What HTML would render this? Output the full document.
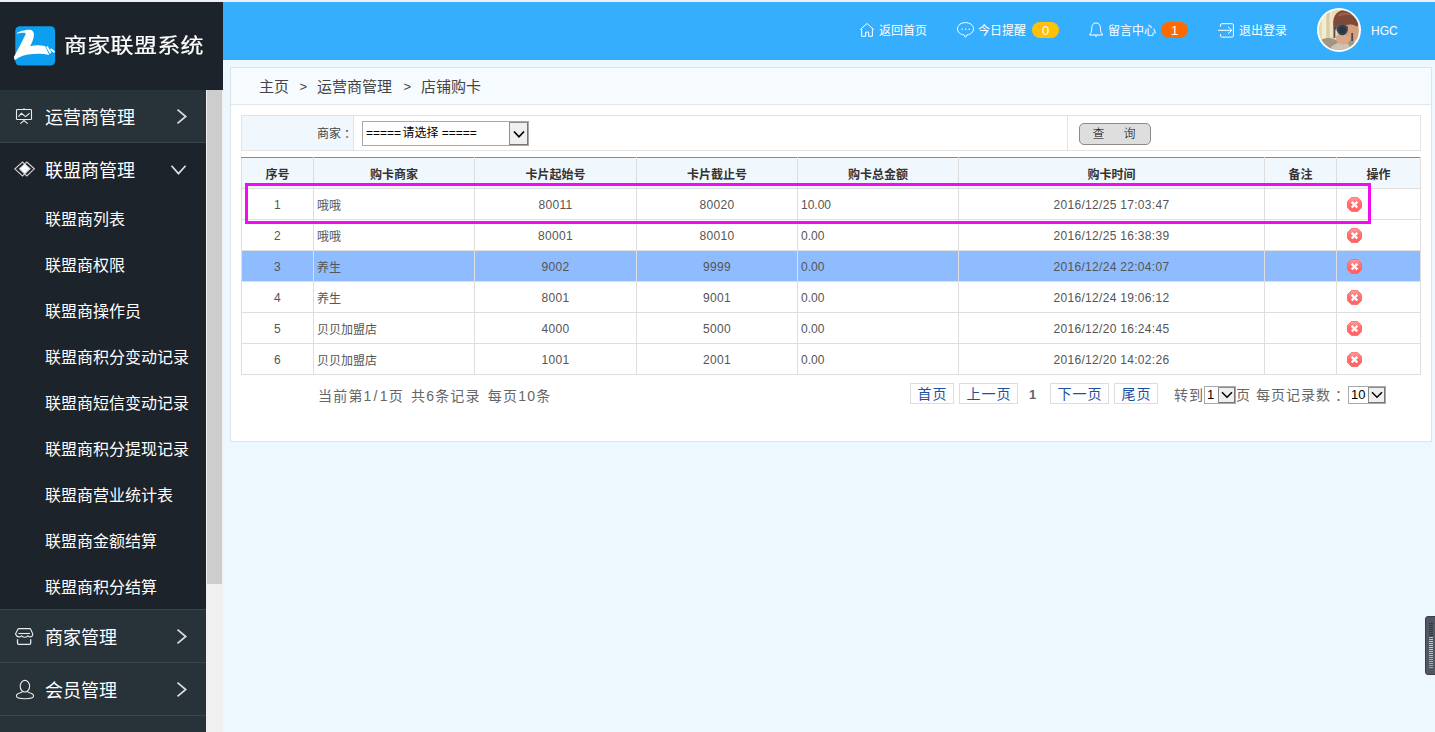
<!DOCTYPE html>
<html lang="zh-CN">
<head>
<meta charset="utf-8">
<title>商家联盟系统</title>
<style>
*{box-sizing:border-box;margin:0;padding:0}
html,body{width:1435px;height:732px;overflow:hidden}
body{position:relative;background:#edf7fe;font-family:"Liberation Sans","Noto Sans CJK SC",sans-serif;font-size:12px;color:#555}
.abs{position:absolute}
#topstrip{left:0;top:0;width:1435px;height:2px;background:#f0f0f4}
#sidetop{left:0;top:2px;width:223px;height:88px;background:#1d232a}
#header{left:223px;top:2px;width:1212px;height:58px;background:#35aefe}
#logo{left:15px;top:25.500px;width:40px;height:39.500px;overflow:visible}
#brand{left:64px;top:30.500px;transform:scaleY(.89);-webkit-text-stroke:.25px #fff;font-size:23px;line-height:30px;color:#fff;letter-spacing:0.3px;white-space:nowrap}
/* sidebar */
#side{left:0;top:90px;width:206px;height:642px;background:#283239;overflow:hidden}
#side .item{position:relative;height:53px;border-bottom:1px solid #3b454d;color:#fff;font-size:18px;line-height:56px;padding-left:45px;overflow:hidden;white-space:nowrap}
#side .item.open{background:#1d232a;border-bottom:0;height:52px}
#side .ico{position:absolute;left:12px;top:14px;width:26px;height:26px}
#side .arr{position:absolute;left:170px;top:16px;width:22px;height:22px}
#side .sub{background:#1d232a;border-bottom:1px solid #3b454d;height:415px}
#side .sub div{height:46px;line-height:49px;overflow:hidden;padding-left:45px;color:#fff;font-size:16px;white-space:nowrap}
#sbar{left:206px;top:90px;width:17px;height:642px;background:#f0f0f0}
#sthumb{left:207px;top:90px;width:15px;height:494px;background:#cdcdcd}
/* header nav */
.nav{position:absolute;top:0;height:58px;line-height:58.500px;color:#fff;font-size:12px;white-space:nowrap}
.nav svg{position:absolute}
.badge{position:absolute;top:20px;height:16px;line-height:17.500px;border-radius:8px;color:#fff;font-size:13px;text-align:center}
/* panel */
#pin{left:0;top:1px;width:1200px;height:0}
#panel{left:230px;top:67px;width:1202px;height:375px;background:#fff;border:1px solid #dfe3e6}
#crumb{left:0;top:-1px;width:1200px;height:37px;background:#f6fbff;border-bottom:1px solid #e3e6e8;font-size:15px;line-height:35px;color:#444;white-space:nowrap}
#crumb span{position:absolute;top:1px}
#crumb span.gt{font-size:13px}
#search{left:10px;top:46px;width:1180px;height:36px;border:1px solid #e3e3e3;background:#fff}
#search .lab{position:absolute;left:0;top:0;width:112px;height:34px;background:#f1f8fd;border-right:1px solid #e3e3e3;line-height:37px;text-align:right;padding-right:0;color:#444;font-size:12px;overflow:hidden}
#search .sel{position:absolute;left:120px;top:5px;width:167px;height:25px;border:1px solid #a9a9a9;background:#fff;font-size:12px;line-height:23px;color:#000;padding-left:3px;white-space:nowrap}
.dd{position:absolute;right:0;top:0;bottom:0;background:#efefef;border:1px solid #8d8d8d;border-right-color:#777;border-bottom-color:#777}
.dd svg{position:absolute;left:50%;top:50%}
#search .vline{position:absolute;left:825px;top:0;width:1px;height:34px;background:#e3e3e3}
#qbtn{position:absolute;left:837px;top:7px;width:72px;height:22px;border:1px solid #8a8a8a;border-radius:5px;background:#dedede;color:#000;font-size:12px;line-height:21px;text-align:center;padding-right:2px;font-weight:300;overflow:hidden;white-space:nowrap}
table{position:absolute;left:10px;top:88px;width:1179px;border-collapse:collapse;table-layout:fixed}
th{height:31px;background:#f1f8fd;border:1px solid #dedede;border-top:1px solid #3c9fe6;color:#333;font-size:12px;font-weight:bold;text-align:center;padding:0}
td{height:31px;border:1px solid #dedede;text-align:center;font-size:12px;color:#555;padding:0;letter-spacing:.3px}
td.l{text-align:left;padding-left:3px;letter-spacing:0}
td.n{padding-top:2px}
tr.hl td{background:#8fbcff}
td.op{position:relative}
.del{position:absolute;left:10px;top:8px;width:15px;height:15px}
#magenta{left:14px;top:114px;width:1126px;height:41px;border:3px solid #f20df0}
#pinfo{left:87px;top:316px;font-size:14px;letter-spacing:1.200px;word-spacing:2px;color:#666;line-height:22px;white-space:nowrap}
.pb{position:absolute;top:314px;height:21px;border:1px solid #ddd;background:#fff;color:#1e50a2;font-size:14px;letter-spacing:1px;line-height:20px;text-align:center;white-space:nowrap;padding-left:1px}
.pt{position:absolute;top:315px;font-size:14px;letter-spacing:1px;color:#666;line-height:22px;white-space:nowrap}
.psel{position:absolute;top:317px;height:18px;border:1px solid #a9a9a9;background:#fff;color:#000;font-size:13px;line-height:16px;padding-left:2px;letter-spacing:0}
#widget{left:1425px;top:616px;width:14px;height:59px;border:1px solid #3a3f49;border-radius:3px;background:#525863}
</style>
</head>
<body>
<div class="abs" id="topstrip"></div>
<div class="abs" id="sidetop"></div>
<svg class="abs" id="logo" viewBox="0 0 40 39.500">
<rect x="0.300" y="0.300" width="39.800" height="39.200" rx="4.500" fill="#0d9fef"/>
<path d="M1.800 7.200 C4 5.500 10 3.800 14.500 3.800 C17 3.800 18.900 5.500 18.900 8.500 C18.900 12 17.500 16 15.200 20.200 C20 19 26 19 30.200 20.200 L34.300 29 C28 27.500 20 27.500 13 28.500 C7 29.500 2 32 -0.200 34.500 L-1.200 31.100 C3 23 8 14 10.700 7.900 C10.500 7 10 6.700 9.400 6.700 C6.500 6.600 4 7 1.800 7.700 Z" fill="#fff"/>
<path d="M31.900 20.500 L35.700 27.200 M35.500 23 L39.600 26.200" stroke="#fff" stroke-width="1.800" fill="none"/>
</svg>
<div class="abs" id="brand">商家联盟系统</div>
<div class="abs" id="header">
<div class="nav" style="left:656px">返回首页<svg style="left:-20px;top:18px" width="16" height="18" viewBox="636 18 16 18"><path d="M637.300 27.400 L644 21.500 L650.700 27.400 M638.600 26.500 V34.300 H642.700 V30.100 H645.700 V34.300 H649.400 V26.500" fill="none" stroke="#fff" stroke-width="1"/></svg></div>
<div class="nav" style="left:755px">今日提醒<svg style="left:-23px;top:18px" width="20" height="20" viewBox="732 18 20 20"><path d="M742.500 20.600 C747 20.600 750.500 23.300 750.500 26.800 C750.500 30 747.800 32.500 744 32.900 L742.500 35.300 L741 32.900 C737.200 32.500 734.500 30 734.500 26.800 C734.500 23.300 738 20.600 742.500 20.600 Z" fill="none" stroke="#fff" stroke-width="1"/><g fill="#fff"><rect x="738.400" y="26.600" width="1.300" height="1.200"/><rect x="742" y="26.600" width="1.300" height="1.200"/><rect x="745.600" y="26.600" width="1.300" height="1.200"/></g></svg></div>
<div class="badge" style="left:809px;width:27px;background:#ffc107">0</div>
<div class="nav" style="left:885px">留言中心<svg style="left:-21px;top:18px" width="18" height="20" viewBox="864 18 18 20"><g fill="none" stroke="#fff" stroke-width="1"><path d="M873 20.900 C869.800 20.900 868.800 23.800 868.800 26 C868.800 29.500 867.800 31.500 866.500 33 H879.700 C878.400 31.500 877.400 29.500 877.400 26 C877.400 23.800 876.400 20.900 873 20.900 Z"/><path d="M871.800 33.500 Q873 35.600 874.300 33.500"/></g></svg></div>
<div class="badge" style="left:938px;width:27px;background:#ff6a00">1</div>
<div class="nav" style="left:1016px">退出登录<svg style="left:-23px;top:18px" width="20" height="20" viewBox="993 18 20 20"><g fill="none" stroke="#fff" stroke-width="1"><path d="M997.500 24.800 V22.900 Q997.500 21.700 998.700 21.700 H1009.200 Q1010.400 21.700 1010.400 22.900 V33.900 Q1010.400 35.100 1009.200 35.100 H998.700 Q997.500 35.100 997.500 33.900 V32"/><path d="M995 28.300 H1008.500 M1005 24.700 L1008.800 28.300 L1005 31.800"/></g></svg></div>
<svg class="abs" style="left:1093px;top:5px" width="46" height="46" viewBox="0 0 46 46">
<defs><clipPath id="avc"><circle cx="23" cy="23" r="20.200"/></clipPath>
<filter id="avb" x="-10%" y="-10%" width="120%" height="120%"><feGaussianBlur stdDeviation="0.700"/></filter>
<linearGradient id="avg" x1="0" y1="0" x2="1" y2="0"><stop offset="0" stop-color="#d9dcae"/><stop offset="0.350" stop-color="#eadcb8"/><stop offset="1" stop-color="#d6c29e"/></linearGradient></defs>
<circle cx="23" cy="23" r="22" fill="#fff"/>
<g clip-path="url(#avc)"><g filter="url(#avb)">
<rect x="-2" y="-2" width="50" height="50" fill="url(#avg)"/>
<rect x="6" y="0" width="4.500" height="32" fill="#f3edcf"/><rect x="13.500" y="2" width="3" height="28" fill="#f0e4c4"/><rect x="10.500" y="2" width="3" height="30" fill="#d8cba2"/>
<path d="M17.800 22 C15.500 11 20 3.500 28 3 C36 2.500 43 8 42.500 17 L41 20.500 C38.500 18 35 17.500 32 19 L31 21 L21 21 L19.500 23 Z" fill="#7f4838"/>
<path d="M22 7.500 C26 4.500 33 4.500 37.500 9 C33 7.500 27 7.500 22 10 Z" fill="#9a5d49"/>
<path d="M30 18 C35 16.500 41 18 42.500 22 L41.500 32 L35 36 L29 30 Z" fill="#d69f80"/>
<path d="M3 47 L5 33 C9 30.500 14 30.500 18 32 L24 35 L37 33 L41 40 L39 47 Z" fill="#a39583"/>
<path d="M15 40 C19 36 25 34.500 31 35.500 L34 40 L30 47 L15 47 Z" fill="#cdc3b3"/>
<path d="M20 31 C20 27 23 26.500 27 28 L33.500 30 C34.500 34 32 37.500 27 37.500 C23 37.500 20 35 20 31 Z" fill="#dba887"/>
<rect x="35.300" y="26" width="1.800" height="8" fill="#4e4650"/>
<rect x="17.500" y="20" width="1.800" height="11" fill="#514c52"/>
<path d="M20.500 19 Q26.300 15 32 19.500 L32 24 L20.500 24 Z" fill="#5c6675"/>
<circle cx="26.300" cy="22.900" r="5.300" fill="#38414f"/>
<circle cx="26.300" cy="22.900" r="3" fill="#2c3440"/>
</g></g>
</svg>
<div class="nav" style="left:1148px;font-size:12px">HGC</div>
</div>
<div class="abs" id="side">
<div class="item"><svg class="ico" viewBox="0 0 26 26"><g fill="none" stroke="#e9ebec" stroke-width="1.100"><rect x="4.500" y="5.500" width="15" height="10" rx="0.800"/><path d="M12 4.300 V5.500"/><path d="M6.400 12.600 L9.400 9.300 L13.500 12.600 L17.600 9.300"/><path d="M8.300 19.700 L12 16.500 L15.700 19.700"/></g></svg>运营商管理<svg class="arr" viewBox="0 0 22 22"><path d="M7.500 3.700 L15.700 10.500 L7.500 17.300" fill="none" stroke="#dcdedf" stroke-width="1.700"/></svg></div>
<div class="item open"><svg class="ico" viewBox="0 0 26 26"><g stroke="#cfd1d3" stroke-width="1.200" fill="none"><path d="M2.800 11.850 L10.500 5 L18 11.850 L10.500 19 Z"/><path d="M7.500 11.850 L14.850 5 L22.300 11.850 L14.850 19 Z"/></g><path d="M7.900 11.850 L12.700 7.300 L17.500 11.850 L12.700 16.400 Z" fill="#fff"/></svg>联盟商管理<svg class="arr" viewBox="0 0 22 22"><path d="M1.500 6.700 L8.500 14.600 L15.600 6.700" fill="none" stroke="#dcdedf" stroke-width="1.700"/></svg></div>
<div class="sub"><div>联盟商列表</div><div>联盟商权限</div><div>联盟商操作员</div><div>联盟商积分变动记录</div><div>联盟商短信变动记录</div><div>联盟商积分提现记录</div><div>联盟商营业统计表</div><div>联盟商金额结算</div><div>联盟商积分结算</div></div>
<div class="item"><svg class="ico" viewBox="0 0 26 26"><g fill="none" stroke="#e9ebec" stroke-width="1.100"><path d="M7 4.600 H17.600 Q18.400 4.600 18.800 5.500 L20.800 10 Q20.800 12.600 18.300 12.900 Q16.800 12.900 15.800 11.800 Q14.400 13.300 12.700 13.300 Q11 13.300 9.600 11.800 Q8.600 12.900 7 12.900 Q4.400 12.600 3.500 10 L5.700 5.500 Q6.100 4.600 7 4.600 Z"/><path d="M6.300 9.500 H18"/><path d="M5.500 15.200 V19 Q5.500 20.300 6.800 20.300 H17.400 Q18.700 20.300 18.700 19 V15.200" stroke-width="1.300"/></g></svg>商家管理<svg class="arr" viewBox="0 0 22 22"><path d="M7.500 3.700 L15.700 10.500 L7.500 17.300" fill="none" stroke="#dcdedf" stroke-width="1.700"/></svg></div>
<div class="item"><svg class="ico" viewBox="0 0 26 26"><g fill="none" stroke="#e9ebec" stroke-width="1.100"><ellipse cx="12.900" cy="9.200" rx="4.700" ry="5.800"/><path d="M10.300 14.200 Q10.300 15.300 8.500 15.800 Q4.400 17 4.400 19 Q4.400 21.700 13 21.700 Q21.600 21.700 21.600 19 Q21.600 17 17.500 15.800 Q15.700 15.300 15.600 14.200"/></g></svg>会员管理<svg class="arr" viewBox="0 0 22 22"><path d="M7.500 3.700 L15.700 10.500 L7.500 17.300" fill="none" stroke="#dcdedf" stroke-width="1.700"/></svg></div>
<div class="item"></div>
</div>
<div class="abs" id="sbar"></div>
<div class="abs" id="sthumb"></div>
<div class="abs" id="panel"><div class="abs" id="pin">
<div class="abs" id="crumb"><span style="left:28px">主页</span><span class="gt" style="left:68.500px">&gt;</span><span style="left:86px">运营商管理</span><span class="gt" style="left:172.500px">&gt;</span><span style="left:190px">店铺购卡</span></div>
<div class="abs" id="search"><div class="lab">商家<span style="position:relative;left:3px">：</span></div><div class="sel">=====<span style="margin-left:-2px"> 请选择</span><span style="margin-left:0"> =====</span><span class="dd" style="width:19px"><svg width="14" height="9" viewBox="0 0 14 9" style="margin:-4px 0 0 -7px"><path d="M2 1.500 L7 6.800 L12 1.500" fill="none" stroke="#000" stroke-width="1.700"/></svg></span></div><div class="vline"></div><div id="qbtn">查<span style="margin-left:19px">询</span></div></div>
<table><colgroup><col style="width:72px"><col style="width:161px"><col style="width:162px"><col style="width:161px"><col style="width:161px"><col style="width:306px"><col style="width:72px"><col style="width:84px"></colgroup>
<tr><th>序号</th><th>购卡商家</th><th>卡片起始号</th><th>卡片截止号</th><th>购卡总金额</th><th>购卡时间</th><th>备注</th><th>操作</th></tr>
<tr><td class="n">1</td><td class="l">哦哦</td><td class="n">80011</td><td class="n">80020</td><td class="l n">10.00</td><td class="n">2016/12/25 17:03:47</td><td></td><td class="op"><svg class="del" viewBox="0 0 15 15"><defs><linearGradient id="dg" x1="0" y1="0" x2="0" y2="1"><stop offset="0" stop-color="#ff9c9c"/><stop offset="0.450" stop-color="#ff6e6e"/><stop offset="1" stop-color="#ff6262"/></linearGradient></defs><path d="M4.500 0.400 H10.500 L14.600 4.500 V10.500 L10.500 14.600 H4.500 L0.400 10.500 V4.500 Z" fill="url(#dg)" stroke="#ff5c5c" stroke-width="0.800"/><path d="M4.700 4.900 L10.300 10.500 M10.300 4.900 L4.700 10.500" stroke="#fff" stroke-width="2.300" stroke-linecap="butt"/></svg></td></tr>
<tr><td class="n">2</td><td class="l">哦哦</td><td class="n">80001</td><td class="n">80010</td><td class="l n">0.00</td><td class="n">2016/12/25 16:38:39</td><td></td><td class="op"><svg class="del" viewBox="0 0 15 15"><path d="M4.500 0.400 H10.500 L14.600 4.500 V10.500 L10.500 14.600 H4.500 L0.400 10.500 V4.500 Z" fill="url(#dg)" stroke="#ff5c5c" stroke-width="0.800"/><path d="M4.700 4.900 L10.300 10.500 M10.300 4.900 L4.700 10.500" stroke="#fff" stroke-width="2.300" stroke-linecap="butt"/></svg></td></tr>
<tr class="hl"><td class="n">3</td><td class="l">养生</td><td class="n">9002</td><td class="n">9999</td><td class="l n">0.00</td><td class="n">2016/12/24 22:04:07</td><td></td><td class="op"><svg class="del" viewBox="0 0 15 15"><path d="M4.500 0.400 H10.500 L14.600 4.500 V10.500 L10.500 14.600 H4.500 L0.400 10.500 V4.500 Z" fill="url(#dg)" stroke="#ff5c5c" stroke-width="0.800"/><path d="M4.700 4.900 L10.300 10.500 M10.300 4.900 L4.700 10.500" stroke="#fff" stroke-width="2.300" stroke-linecap="butt"/></svg></td></tr>
<tr><td class="n">4</td><td class="l">养生</td><td class="n">8001</td><td class="n">9001</td><td class="l n">0.00</td><td class="n">2016/12/24 19:06:12</td><td></td><td class="op"><svg class="del" viewBox="0 0 15 15"><path d="M4.500 0.400 H10.500 L14.600 4.500 V10.500 L10.500 14.600 H4.500 L0.400 10.500 V4.500 Z" fill="url(#dg)" stroke="#ff5c5c" stroke-width="0.800"/><path d="M4.700 4.900 L10.300 10.500 M10.300 4.900 L4.700 10.500" stroke="#fff" stroke-width="2.300" stroke-linecap="butt"/></svg></td></tr>
<tr><td class="n">5</td><td class="l">贝贝加盟店</td><td class="n">4000</td><td class="n">5000</td><td class="l n">0.00</td><td class="n">2016/12/20 16:24:45</td><td></td><td class="op"><svg class="del" viewBox="0 0 15 15"><path d="M4.500 0.400 H10.500 L14.600 4.500 V10.500 L10.500 14.600 H4.500 L0.400 10.500 V4.500 Z" fill="url(#dg)" stroke="#ff5c5c" stroke-width="0.800"/><path d="M4.700 4.900 L10.300 10.500 M10.300 4.900 L4.700 10.500" stroke="#fff" stroke-width="2.300" stroke-linecap="butt"/></svg></td></tr>
<tr><td class="n">6</td><td class="l">贝贝加盟店</td><td class="n">1001</td><td class="n">2001</td><td class="l n">0.00</td><td class="n">2016/12/20 14:02:26</td><td></td><td class="op"><svg class="del" viewBox="0 0 15 15"><path d="M4.500 0.400 H10.500 L14.600 4.500 V10.500 L10.500 14.600 H4.500 L0.400 10.500 V4.500 Z" fill="url(#dg)" stroke="#ff5c5c" stroke-width="0.800"/><path d="M4.700 4.900 L10.300 10.500 M10.300 4.900 L4.700 10.500" stroke="#fff" stroke-width="2.300" stroke-linecap="butt"/></svg></td></tr>
</table>
<div class="abs" id="magenta"></div>
<div class="abs" id="pinfo">当前第1<span style="margin:0 1px">/</span>1页 共6条记录 每页10条</div>
<div class="pb" style="left:679px;width:44px">首页</div>
<div class="pb" style="left:728px;width:59px">上一页</div>
<div class="pt" style="left:798px;font-weight:bold;font-size:13px">1</div>
<div class="pb" style="left:819px;width:59px">下一页</div>
<div class="pb" style="left:883px;width:44px">尾页</div>
<div class="pt" style="left:943px">转到</div>
<div class="psel" style="left:973px;width:32px">1<span class="dd" style="width:17px"><svg width="12" height="8" viewBox="0 0 12 8" style="margin:-4px 0 0 -6px"><path d="M1 1.200 L6 6.200 L11 1.200" fill="none" stroke="#000" stroke-width="1.500"/></svg></span></div>
<div class="pt" style="left:1005px">页 每页记录数<span style="position:relative;left:4px">：</span></div>
<div class="psel" style="left:1117px;width:38px">10<span class="dd" style="width:17px"><svg width="12" height="8" viewBox="0 0 12 8" style="margin:-4px 0 0 -6px"><path d="M1 1.200 L6 6.200 L11 1.200" fill="none" stroke="#000" stroke-width="1.500"/></svg></span></div>
</div></div>
<div class="abs" id="widget"><i style="position:absolute;left:3px;top:6px;width:4px;height:1px;background:#34383f"></i><i style="position:absolute;left:3px;top:8px;width:4px;height:1px;background:#34383f"></i><i style="position:absolute;left:3px;top:10px;width:4px;height:1px;background:#34383f"></i><i style="position:absolute;left:3px;top:12px;width:4px;height:1px;background:#34383f"></i><i style="position:absolute;left:3px;top:14px;width:4px;height:1px;background:#34383f"></i><i style="position:absolute;left:3px;top:16px;width:4px;height:1px;background:#34383f"></i><i style="position:absolute;left:3px;top:18px;width:4px;height:1px;background:#34383f"></i><i style="position:absolute;left:3px;top:20px;width:4px;height:1px;background:#f0b83a"></i><i style="position:absolute;left:3px;top:22px;width:4px;height:1px;background:#eec43c"></i><i style="position:absolute;left:3px;top:24px;width:4px;height:1px;background:#ecd040"></i><i style="position:absolute;left:3px;top:26px;width:4px;height:1px;background:#e6d848"></i><i style="position:absolute;left:3px;top:28px;width:4px;height:1px;background:#dcdc50"></i><i style="position:absolute;left:3px;top:30px;width:4px;height:1px;background:#cfe05a"></i><i style="position:absolute;left:3px;top:32px;width:4px;height:1px;background:#bfe066"></i><i style="position:absolute;left:3px;top:34px;width:4px;height:1px;background:#aee070"></i><i style="position:absolute;left:3px;top:36px;width:4px;height:1px;background:#9be07c"></i><i style="position:absolute;left:3px;top:38px;width:4px;height:1px;background:#88de88"></i><i style="position:absolute;left:3px;top:40px;width:4px;height:1px;background:#76dc94"></i><i style="position:absolute;left:3px;top:42px;width:4px;height:1px;background:#66daa0"></i><i style="position:absolute;left:3px;top:44px;width:4px;height:1px;background:#58d8ac"></i><i style="position:absolute;left:3px;top:46px;width:4px;height:1px;background:#4cd6b6"></i><i style="position:absolute;left:3px;top:48px;width:4px;height:1px;background:#42d4c0"></i><i style="position:absolute;left:3px;top:50px;width:4px;height:1px;background:#3ad2c8"></i></div>
</body>
</html>
